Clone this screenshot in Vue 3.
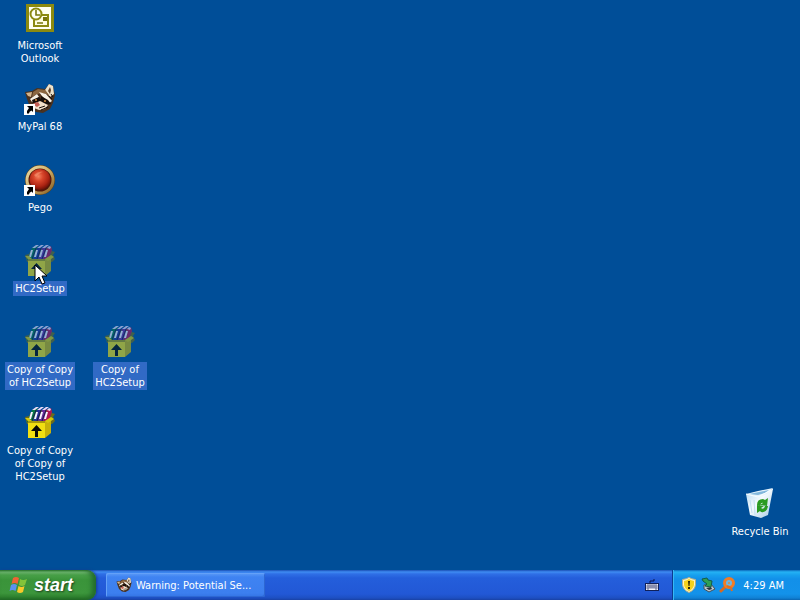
<script setup>
const shortcuts = [
  { label: 'Microsoft\nOutlook', icon: 'outlook' },
  { label: 'MyPal 68', icon: 'raccoon', shortcut: true },
  { label: 'Pego', icon: 'pego', shortcut: true },
  { label: 'HC2Setup', icon: 'box', selected: true, pointer: true },
  { label: 'Copy of Copy\nof HC2Setup', icon: 'box', selected: true },
  { label: 'Copy of\nHC2Setup', icon: 'box', selected: true, column: 'second' },
  { label: 'Copy of Copy\nof Copy of\nHC2Setup', icon: 'box' },
  { label: 'Recycle Bin', icon: 'bin', column: 'corner' }
]
</script>

<template>
  <div class="screen">
    <svg class="symbols" aria-hidden="true">
      <defs>
        <linearGradient id="gBin" x1="0" y1="0" x2="1" y2="1">
          <stop offset="0" stop-color="#b4d9f2" />
          <stop offset=".45" stop-color="#f4fafe" />
          <stop offset="1" stop-color="#a5c9e4" />
        </linearGradient>
        <radialGradient id="gRed" cx=".42" cy=".35" r=".65">
          <stop offset="0" stop-color="#f58460" />
          <stop offset=".35" stop-color="#d8452a" />
          <stop offset=".75" stop-color="#ac2413" />
          <stop offset="1" stop-color="#6d1208" />
        </radialGradient>
        <linearGradient id="gRing" x1="0" y1="0" x2="1" y2="1">
          <stop offset="0" stop-color="#ecdfae" />
          <stop offset=".5" stop-color="#cfae66" />
          <stop offset="1" stop-color="#7c541c" />
        </linearGradient>
      </defs>

      <symbol id="outlook" viewBox="0 0 32 32">
        <rect x="2" y="2" width="28" height="28" fill="#8c8a10" />
        <rect x="5" y="5" width="22" height="22" fill="#fffff2" />
        <path d="M10 18v6h14V13h-6" fill="#fffde0" stroke="#8c8a10" stroke-width="2" />
        <circle cx="12" cy="12" r="5.500" fill="#fffff2" stroke="#8c8a10" stroke-width="2" />
        <path d="M12 8v5h4M13 21h6" fill="none" stroke="#77750c" stroke-width="1.600" />
        <rect x="19" y="15" width="4" height="4" fill="#77750c" />
      </symbol>

      <symbol id="raccoon" viewBox="0 0 32 32">
        <path d="M1 9l7-1 5-3 8 1 4-5 4 2 2 9-2 8-3 6-7 4-7-1-6-5-3-8z" fill="#4b321f" />
        <path d="M21 7l4-6 4 2 1 8-4 3z" fill="#eee2ca" />
        <path d="M24 8l2-4 1 3-1 4z" fill="#5b3f2a" />
        <path d="M2 10l6-1-1 5-3-1z" fill="#d4b58d" />
        <path d="M9 9l5-3 7 1 4 5-6-2-6 1-5 3z" fill="#8b6640" />
        <path d="M6 16l7-5 2 3-7 5zM15 9l7 2 6 7-3 2-7-7z" fill="#f8f1e5" />
        <path d="M8 17l7-3 3 3-3 3H9zM17 13l7 4 3 4-6 1-4-4z" fill="#160d09" />
        <circle cx="12" cy="17" r="1" fill="#d69143" />
        <circle cx="21" cy="18" r="1" fill="#d69143" />
        <path d="M9 21l7-3 8 4-3 4-6 1-5-2z" fill="#f1dfc9" />
        <path d="M10 20l4-1 2 3-3 2-3-2z" fill="#c55f55" />
        <path d="M15 25l6-2M17 27l7-3M25 13l3 3M27 11l2 3" stroke="#1b110b" />
      </symbol>

      <symbol id="pego" viewBox="0 0 32 32">
        <circle cx="16" cy="16" r="15" fill="#584018" />
        <circle cx="16" cy="16" r="14.500" fill="url(#gRing)" />
        <circle cx="16" cy="16" r="11.500" fill="#511708" />
        <circle cx="16" cy="15.500" r="10.500" fill="url(#gRed)" />
        <path d="M10 11q5-5 10-3-4 0-8 5z" fill="#ffb28c" opacity=".4" />
      </symbol>

      <symbol id="box" viewBox="0 0 32 32">
        <path d="M1 10l4-1 2-4 20-3 1 4 3 1-2 3 2 4-3 3H3z" fill="#6b6c1c" />
        <path d="M3 15L8 3l6-3-4 15z" fill="#0a7a48" />
        <path d="M9 15l4-12 5-3-4 15z" fill="#252f9a" />
        <path d="M14 15l4-12 5-3-3 15z" fill="#6b2a9a" />
        <path d="M19 15l4-12 4-2 1 4-4 10z" fill="#b01554" />
        <path d="M8 3l4-3h3l-4 3zM13 3l4-3h3l-4 3zM18 3l4-3h3l-4 3zM23 3l2-2 2 1-1 2z" fill="#eadcf8" />
        <path d="M7 5h2L7 12H5zM12 5h2l-2 7h-2zM17 5h2l-2 7h-2zM22 5h2l-2 7h-2z" fill="#f7f2ff" />
        <path d="M12 3L8 14M17 3l-4 11M22 3l-4 11" fill="none" stroke="#171b45" />
        <path d="M4 14h17v17H4z" fill="#f1df12" />
        <path d="M21 14l6-3v15l-6 5z" fill="#c7b20a" />
        <path d="M4 14l-3-3 4 0 3 3zM21 14l6-4 3 2-6 4z" fill="#d5c90d" />
        <path d="M4 14h17v2H4z" fill="#a69a0d" />
        <path d="M12.500 18L7 24h4v6h3v-6h4z" fill="#090b06" />
      </symbol>

      <symbol id="bin" viewBox="0 0 32 32">
        <path d="M2 6l13 2 14-7-5 26-7 3-11-3z" fill="url(#gBin)" />
        <path d="M2 6l12-3 15-3-6 6-9 3z" fill="#e2f2fc" />
        <path d="M5 6l10-2 10-2-4 3-7 2z" fill="#81b7dc" />
        <path d="M2 6l12 3 15-8" fill="none" stroke="#f7fdff" />
        <path d="M6 12l2 13M10 12l1 15" fill="none" stroke="#c3dff1" />
        <path d="M13 17q0-6 6-6l2 1 3-2-1 8-7-1 3-2q-2-1-3 3z" fill="#2b9b22" />
        <path d="M24 18q-1 7-7 6l-1-1-3 2v-8l7 1-3 2q3 2 4-2z" fill="#2b9b22" />
      </symbol>

      <symbol id="arrow" viewBox="0 0 11 11">
        <path d="M0 0h11v11H0z" fill="#fff" />
        <path d="M3 2h6v6L7.500 6.500Q5 7.500 5 9.500H3Q2.500 6.500 5 4z" fill="#000" />
      </symbol>

      <symbol id="pointer" viewBox="0 0 13 21">
        <path d="M1 1v16l4-4 3 7 3-1-3-7h5z" fill="#fff" stroke="#000" />
      </symbol>

      <symbol id="flag" viewBox="0 0 20 20">
        <path d="M4 3q3-2 6 0L8.500 9q-3-2-6 0z" fill="#ef6335" />
        <path d="M11 4q3 2 7 0l-2 6q-3 2-6 0z" fill="#82c43a" />
        <path d="M2 10q3-2 6 0l-1.500 6q-3-2-6 0z" fill="#5b91ef" />
        <path d="M9.500 11q3 2 6 0L14 17q-3 2-6 0z" fill="#f8c92a" />
      </symbol>

      <symbol id="keyboard" viewBox="0 0 14 12">
        <path d="M5 4V2h4V0" fill="none" stroke="#0a174e" />
        <rect x="0" y="4" width="14" height="8" fill="#10205a" />
        <rect x="1" y="5" width="12" height="6" fill="#f4f4fb" />
        <path d="M1 7h12M1 9h12" stroke="#3b4576" stroke-width=".6" />
        <path d="M3 5v4M5 5v4M7 5v4M9 5v4M11 5v4M3 9v2M11 9v2" stroke="#3b4576" stroke-width=".8" />
      </symbol>

      <symbol id="shield" viewBox="0 0 14 16">
        <path d="M7 .5Q9.500 2 13.500 2.500v5Q13 13 7 15.500 1 13 .5 7.500v-5Q4.500 2 7 .5z" fill="#fff6bd" stroke="#b3ad8c" />
        <path d="M7 2q2 1.500 5 2v4q-1 4-5 6-4-2-5-6V4q3-.5 5-2z" fill="#f5d21c" />
        <path d="M6 4h2l-.5 5h-1zM6 10h2v2H6z" fill="#2b2505" />
      </symbol>

      <symbol id="device" viewBox="0 0 14 16">
        <path d="M3 8l7-1 4 5-6 3-5-3z" fill="#c0c8cc" stroke="#42515c" />
        <path d="M5 11l5-1 1 2-3 1z" fill="#26343d" />
        <path d="M1 2l5-1 1 2 4 1-1 6-6-1 2-2-4-3z" fill="#2fa054" stroke="#145c48" />
      </symbol>

      <symbol id="lens" viewBox="0 0 16 16">
        <path d="M6 10l-4 4" stroke="#d9691f" stroke-width="3" stroke-linecap="round" />
        <circle cx="10" cy="6" r="4.500" fill="#6ab6e2" stroke="#f07c24" stroke-width="3" />
        <path d="M8 9l4 2 1 3" fill="none" stroke="#e06f20" stroke-width="2" />
        <circle cx="10" cy="6" r="1" fill="#d8863f" />
      </symbol>
    </svg>

    <main class="desktop">
      <button
        v-for="item in shortcuts"
        :key="item.label"
        class="item"
        :class="[item.column, { selected: item.selected }]"
        type="button"
      >
        <span class="picture">
          <svg class="glyph" aria-hidden="true"><use :href="'#' + item.icon" /></svg>
          <svg v-if="item.shortcut" class="arrow" aria-hidden="true"><use href="#arrow" /></svg>
          <svg v-if="item.pointer" class="pointer" aria-hidden="true"><use href="#pointer" /></svg>
        </span>
        <span class="label">{{ item.label }}</span>
      </button>
    </main>

    <footer class="taskbar">
      <button class="start" type="button">
        <svg class="flag" aria-hidden="true"><use href="#flag" /></svg>
        <span>start</span>
      </button>
      <button class="task" type="button">
        <svg class="small" aria-hidden="true"><use href="#raccoon" /></svg>
        <span>Warning: Potential Se...</span>
      </button>
      <svg class="keyboard" aria-hidden="true"><use href="#keyboard" /></svg>
      <div class="tray">
        <svg class="small" aria-hidden="true"><use href="#shield" /></svg>
        <svg class="small" aria-hidden="true"><use href="#device" /></svg>
        <svg class="small" aria-hidden="true"><use href="#lens" /></svg>
        <time class="clock">4:29 AM</time>
      </div>
    </footer>
  </div>
</template>

<style>
body {
  margin: 0;
  background: #004e98;
}
</style>

<style scoped>
.screen {
  display: flex;
  flex-direction: column;
  min-height: 100vh;
  overflow: hidden;
  background: #004e98;
  color: #fff;
  font: 11px/13px Tahoma, "DejaVu Sans Condensed", "DejaVu Sans", sans-serif;
}
.symbols {
  position: absolute;
  width: 0;
  height: 0;
}
button {
  margin: 0;
  padding: 0;
  border: 0;
  background: none;
  color: inherit;
  font: inherit;
}
.desktop {
  flex: 1;
  display: grid;
  grid-template-columns: repeat(auto-fill, 80px);
  grid-template-rows: repeat(7, 81px);
  padding-top: 2px;
}
.item {
  grid-column: 1;
  display: flex;
  flex-direction: column;
  align-items: center;
  gap: 4px;
}
.second {
  grid-column: 2;
  grid-row: 5;
}
.corner {
  grid-column: -2;
  grid-row: 7;
}
.picture {
  position: relative;
  width: 32px;
  height: 32px;
}
.glyph {
  display: block;
  width: 32px;
  height: 32px;
}
.selected .glyph {
  opacity: 0.6;
}
.arrow {
  position: absolute;
  left: 0;
  bottom: 0;
  width: 11px;
  height: 11px;
}
.pointer {
  position: absolute;
  left: 10px;
  top: 19px;
  width: 13px;
  height: 21px;
}
.label {
  padding: 1px 2px;
  white-space: pre;
  text-align: center;
}
.selected .label {
  background: #316ac5;
}
.taskbar {
  display: flex;
  align-items: stretch;
  height: 30px;
  background: linear-gradient(#1c50b5 0, #3f8cf3 2px, #2f6fe6 4px, #245edb 8px, #2258d6 24px, #1d4fc2 28px, #1941a5 30px);
}
.start {
  display: flex;
  align-items: center;
  gap: 5px;
  width: 96px;
  padding-left: 9px;
  border-radius: 0 9px 9px 0;
  background: linear-gradient(#2c7a2c 0, #76bd76 2px, #48a048 5px, #3a943a 10px, #3c963c 23px, #2f832f 27px, #1f661f 30px);
  box-shadow: inset -4px 0 5px #236b2c, 1px 0 3px #153d91;
  font: italic bold 18px/20px "Liberation Sans", Arial, sans-serif;
  text-shadow: 1px 1px 2px #1c401c;
}
.flag {
  width: 20px;
  height: 20px;
}
.task {
  display: flex;
  align-items: center;
  gap: 4px;
  width: 159px;
  margin: 3px auto 3px 10px;
  padding-left: 10px;
  border-radius: 2px;
  background: linear-gradient(#5c9cf8 0, #3f83f2 4px, #3c7fef 20px, #3474e4 24px);
  box-shadow: inset 1px 1px #64a1f8, inset -1px -1px #2d67d2;
  white-space: nowrap;
}
.small {
  flex: none;
  width: 16px;
  height: 16px;
}
.keyboard {
  align-self: center;
  width: 14px;
  height: 12px;
  margin-right: 13px;
}
.tray {
  display: flex;
  align-items: center;
  gap: 3px;
  padding: 0 16px 0 8px;
  border-left: 1px solid #0c3c8f;
  background: linear-gradient(#0d69bb 0, #25b2f4 2px, #17a0ee 5px, #1290e9 9px, #1392ea 24px, #1081d5 28px, #0b64b0 30px);
  box-shadow: inset 1px 0 #37b9f5;
}
.clock {
  margin-left: 5px;
  white-space: nowrap;
}
</style>
